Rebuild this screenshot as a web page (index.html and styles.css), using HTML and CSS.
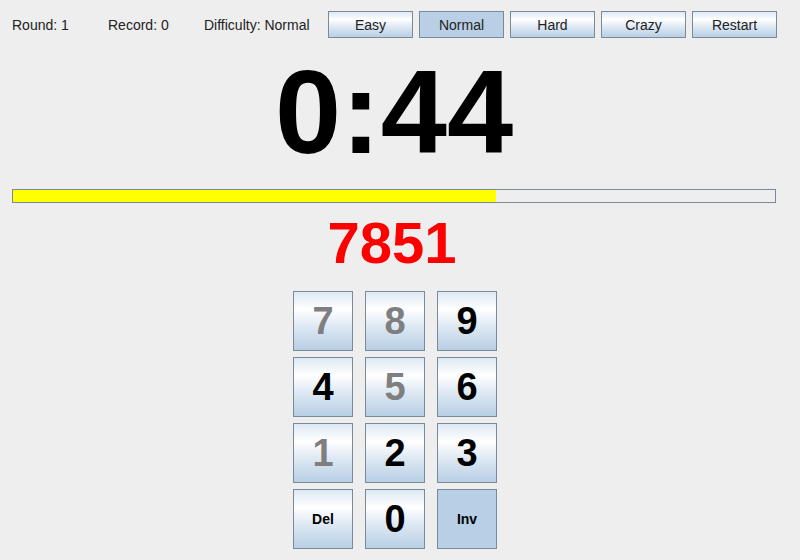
FILE: index.html
```html
<!DOCTYPE html>
<html>
<head>
<meta charset="utf-8">
<link rel="stylesheet" href="styles.css">
</head>
<body>
<div class="app">
  <div class="topbar">
    <span class="label label-round">Round: 1</span>
    <span class="label label-record">Record: 0</span>
    <span class="label label-diff">Difficulty: Normal</span>
    <div class="modes">
      <button class="btn">Easy</button>
      <button class="btn selected">Normal</button>
      <button class="btn">Hard</button>
      <button class="btn">Crazy</button>
      <button class="btn">Restart</button>
    </div>
  </div>
  <div class="timer">0:44</div>
  <div class="progress"><div class="fill" style="width: 63.4%"></div></div>
  <div class="target">7851</div>
  <div class="keypad">
    <button class="key used">7</button>
    <button class="key used">8</button>
    <button class="key">9</button>
    <button class="key">4</button>
    <button class="key used">5</button>
    <button class="key">6</button>
    <button class="key used">1</button>
    <button class="key">2</button>
    <button class="key">3</button>
    <button class="key small">Del</button>
    <button class="key">0</button>
    <button class="key small selected">Inv</button>
  </div>
</div>
</body>
</html>
```
FILE: styles.css
```css
html, body {
  margin: 0;
  padding: 0;
  background: #eeeeee;
}
body {
  font-family: "Liberation Sans", Arial, sans-serif;
  color: #333333;
}
.app {
  width: 788px;
  height: 560px;
  padding: 0 12px;
  box-sizing: border-box;
  display: flex;
  flex-direction: column;
}
.topbar {
  display: flex;
  align-items: center;
  margin-top: 11px;
  height: 27px;
}
.label {
  font-size: 14px;
  color: #222;
  flex-shrink: 0;
  white-space: nowrap;
}
.label-round, .label-record { width: 96px; }
.label-diff { width: 124px; }
.modes {
  display: flex;
  gap: 6px;
}
.btn {
  width: 85px;
  height: 27px;
  padding: 0;
  margin: 0;
  font-family: "Liberation Sans", Arial, sans-serif;
  font-size: 14px;
  color: #222;
  border: 1px solid #7a8a99;
  border-radius: 0;
  background: linear-gradient(to bottom, #dde8f3 0%, #ffffff 30%, #dde8f3 60%, #b8cfe5 100%);
  box-sizing: border-box;
}
.btn.selected, .key.selected {
  background: #b8cfe5;
}
.timer {
  margin-top: 14px;
  font-size: 119px;
  line-height: 119px;
  font-weight: bold;
  color: #000;
  text-align: center;
}
.progress {
  margin-top: 18px;
  height: 14px;
  border: 1px solid #7a8a99;
  box-sizing: border-box;
  background: #eeeeee;
  display: flex;
}
.fill {
  background: #ffff00;
  height: 100%;
}
.target {
  margin-top: 11px;
  font-size: 58px;
  line-height: 58px;
  font-weight: bold;
  color: #ff0000;
  text-align: center;
  padding-right: 4px;
}
.keypad {
  margin: 19px auto 0;
  display: grid;
  grid-template-columns: repeat(3, 60px);
  grid-auto-rows: 60px;
  column-gap: 12px;
  row-gap: 6px;
  transform: translateX(1px);
}
.key {
  width: 60px;
  height: 60px;
  padding: 0;
  margin: 0;
  border: 1px solid #7a8a99;
  border-radius: 0;
  box-sizing: border-box;
  background: linear-gradient(to bottom, #dde8f3 0%, #ffffff 30%, #dde8f3 60%, #b8cfe5 100%);
  font-family: "Liberation Sans", Arial, sans-serif;
  font-size: 38px;
  font-weight: bold;
  color: #000;
  display: flex;
  align-items: center;
  justify-content: center;
}
.key.used {
  color: #7f7f7f;
}
.key.small {
  font-size: 14px;
  color: #000;
}
```
